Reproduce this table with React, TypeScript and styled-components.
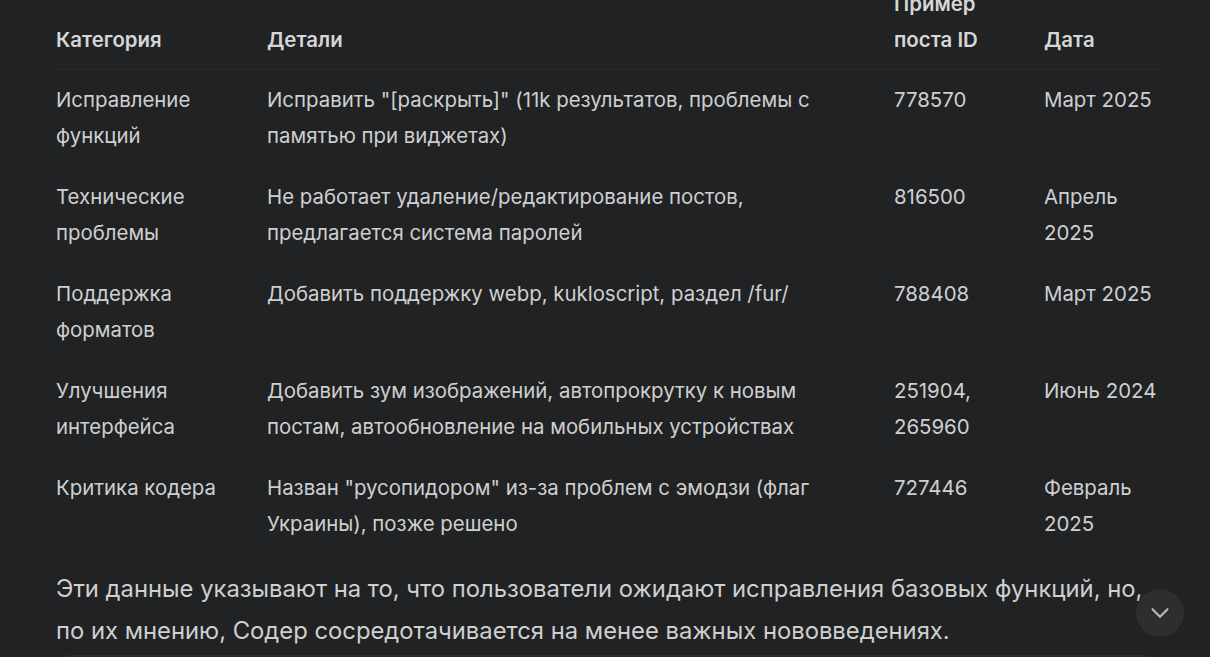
import React from 'react'
import styled, { createGlobalStyle } from 'styled-components'
import { ChevronDown } from 'lucide-react'

const GlobalStyle = createGlobalStyle`
  html, body {
    margin: 0;
    padding: 0;
    background: #212224;
    overflow: hidden;
  }
  body {
    font-family: Inter, "Noto Sans", sans-serif;
    color: #cfcfcf;
  }
`

const Page = styled.div`
  position: relative;
  width: 1210px;
  height: 657px;
  overflow: hidden;
`

const Content = styled.div`
  width: 1104px;
  margin: -26px 0 0 56px;
`

const Table = styled.table`
  width: calc(100% + 4px);
  margin-left: -4px;
  border-collapse: collapse;
  table-layout: fixed;
  font-size: 20.4px;
  line-height: 36px;
`

const HeadCell = styled.th`
  text-align: left;
  vertical-align: bottom;
  font-weight: 600;
  color: #d6d6d6;
  padding: 12px 0 11px 16px;
  border-bottom: 1px solid #292a2d;

  &:first-child {
    padding-left: 4px;
  }
`

const Row = styled.tr`
  & + & td {
    border-top: 1px solid #252629;
  }
`

const Cell = styled.td`
  vertical-align: top;
  padding: 12px 0 12px 16px;

  &:first-child {
    padding-left: 4px;
  }
`

const Paragraph = styled.p`
  margin: 14px 0 0;
  font-size: 23.8px;
  line-height: 42px;
  color: #cfcfcf;
`

const ScrollButton = styled.button`
  position: absolute;
  left: 1136px;
  top: 589px;
  width: 48px;
  height: 48px;
  border-radius: 50%;
  border: none;
  background: #2c2e30;
  color: #b9b9b9;
  display: flex;
  align-items: center;
  justify-content: center;
  padding: 0;
`

const Composer = styled.div`
  position: absolute;
  left: 52px;
  top: 655px;
  width: 1109px;
  height: 60px;
  border-radius: 20px 20px 0 0;
  background: #28292c;
  border-top: 1px solid #2e2f32;
`

type Entry = {
  category: string
  details: string
  post: string
  date: string
}

const entries: Entry[] = [
  {
    category: 'Исправление функций',
    details: 'Исправить "[раскрыть]" (11k результатов, проблемы с памятью при виджетах)',
    post: '778570',
    date: 'Март 2025',
  },
  {
    category: 'Технические проблемы',
    details: 'Не работает удаление/редактирование постов, предлагается система паролей',
    post: '816500',
    date: 'Апрель 2025',
  },
  {
    category: 'Поддержка форматов',
    details: 'Добавить поддержку webp, kukloscript, раздел /fur/',
    post: '788408',
    date: 'Март 2025',
  },
  {
    category: 'Улучшения интерфейса',
    details: 'Добавить зум изображений, автопрокрутку к новым постам, автообновление на мобильных устройствах',
    post: '251904, 265960',
    date: 'Июнь 2024',
  },
  {
    category: 'Критика кодера',
    details: 'Назван "русопидором" из-за проблем с эмодзи (флаг Украины), позже решено',
    post: '727446',
    date: 'Февраль 2025',
  },
]

export default function App() {
  return (
    <Page>
      <GlobalStyle />
      <Content>
        <Table>
          <colgroup>
            <col style={{ width: 199 }} />
            <col style={{ width: 627 }} />
            <col style={{ width: 150 }} />
            <col style={{ width: 132 }} />
          </colgroup>
          <thead>
            <tr>
              <HeadCell>Категория</HeadCell>
              <HeadCell>Детали</HeadCell>
              <HeadCell>Пример поста ID</HeadCell>
              <HeadCell>Дата</HeadCell>
            </tr>
          </thead>
          <tbody>
            {entries.map((item) => (
              <Row key={item.post}>
                <Cell>{item.category}</Cell>
                <Cell>{item.details}</Cell>
                <Cell>{item.post}</Cell>
                <Cell>{item.date}</Cell>
              </Row>
            ))}
          </tbody>
        </Table>
        <Paragraph>
          Эти данные указывают на то, что пользователи ожидают исправления базовых функций, но, по их
          мнению, Содер сосредотачивается на менее важных нововведениях.
        </Paragraph>
      </Content>
      <ScrollButton aria-label="Прокрутить вниз">
        <ChevronDown size={30} strokeWidth={1.7} />
      </ScrollButton>
      <Composer />
    </Page>
  )
}
